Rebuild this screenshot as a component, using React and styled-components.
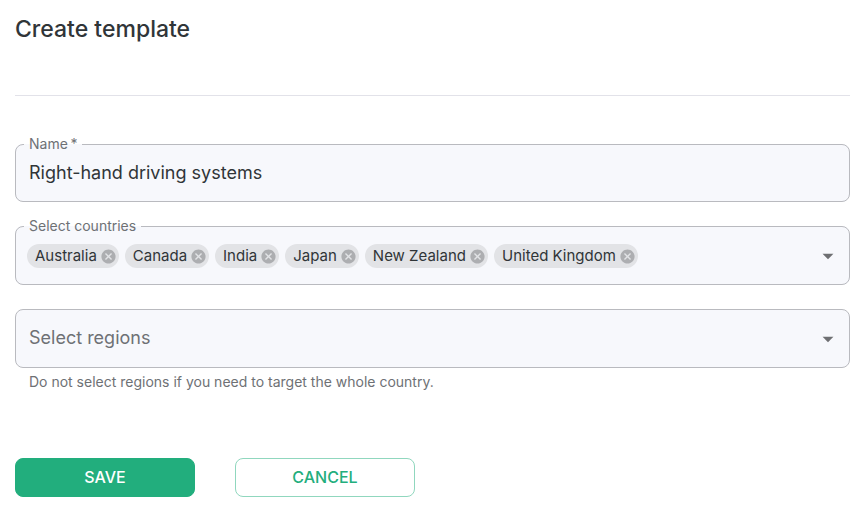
import React, { useState } from "react";
import styled, { createGlobalStyle, css } from "styled-components";

const GlobalStyle = createGlobalStyle`
  *, *::before, *::after { box-sizing: border-box; }
  body {
    margin: 0;
    background: #fff;
    color: #303538;
    font-family: Inter, Roboto, "Liberation Sans", sans-serif;
    font-size: 18px;
  }
  button, input, select { font: inherit; color: inherit; }
`;

const Page = styled.main`
  padding: 12px 13px 12px 15px;
`;

const Header = styled.header`
  padding-bottom: 49px;
  border-bottom: 1px solid #e2e2e9;
`;

const Title = styled.h1`
  margin: 0;
  font-size: 23px;
  font-weight: 500;
  line-height: 34px;
`;

const Form = styled.form`
  display: flex;
  flex-direction: column;
  padding-top: 38px;
`;

const outline = css`
  border: 1px solid #b9babf;
  border-radius: 8px;
  background: #f7f8fc;
`;

const Outline = styled.fieldset`
  ${outline}
  min-width: 0;
  margin: 0 0 ${(p) => p.$gap}px;
  padding: 0 8px;
`;

const Legend = styled.legend`
  padding: 0 5px;
  color: #6e7175;
  font-size: 14px;
  line-height: 20px;
`;

const TextInput = styled.input`
  display: block;
  width: 100%;
  height: 47px;
  padding: 0 5px 10px;
  border: 0;
  outline: 0;
  background: transparent;
  font-size: 18px;
`;

const ChipField = styled.div`
  display: flex;
  align-items: center;
  min-height: 48px;
  padding: 0 0 8px 3px;
`;

const Chips = styled.div`
  display: flex;
  flex: 1;
  flex-wrap: wrap;
  gap: 6px;
`;

const Chip = styled.span`
  display: inline-flex;
  align-items: center;
  gap: 3px;
  height: 24px;
  padding: 0 2px 0 8px;
  border-radius: 12px;
  background: #e2e3e6;
  font-size: 15px;
  line-height: 24px;
  white-space: nowrap;
`;

const IconButton = styled.button`
  display: flex;
  padding: 0;
  border: 0;
  background: transparent;
  color: ${(p) => p.$color};
  cursor: pointer;
`;

const ChipInput = styled.input`
  flex: 1;
  width: 0;
  min-width: 30px;
  height: 24px;
  padding: 0;
  border: 0;
  outline: 0;
  background: transparent;
`;

const SelectBox = styled.div`
  ${outline}
  display: grid;
  align-items: center;
  height: 59px;
`;

const Select = styled.select`
  grid-area: 1 / 1;
  width: 100%;
  height: 57px;
  padding: 0 40px 2px 13px;
  border: 0;
  outline: 0;
  appearance: none;
  background: transparent;
  color: #6e7175;
  font-size: 18px;
`;

const SelectArrow = styled.span`
  grid-area: 1 / 1;
  display: flex;
  justify-self: end;
  padding-right: 8px;
  color: #6e6f72;
  pointer-events: none;
`;

const Helper = styled.p`
  margin: 4px 14px 0;
  color: #6e7175;
  font-size: 14px;
  line-height: 20px;
`;

const Actions = styled.div`
  display: flex;
  gap: 40px;
  padding-top: 66px;
`;

const Button = styled.button`
  width: 180px;
  height: 39px;
  padding: 0 0 2px;
  border: 1px solid ${(p) => (p.$primary ? "#22ae7d" : "#90d7be")};
  border-radius: 8px;
  background: ${(p) => (p.$primary ? "#22ae7d" : "#fff")};
  color: ${(p) => (p.$primary ? "#fff" : "#22ae7d")};
  font-size: 16px;
  font-weight: 500;
  text-transform: uppercase;
  cursor: pointer;
`;

const RemoveIcon = () => (
  <svg width="17" height="17" viewBox="0 0 24 24" fill="currentColor" aria-hidden="true">
    <path d="M12 2C6.47 2 2 6.47 2 12s4.47 10 10 10 10-4.47 10-10S17.53 2 12 2zm5 13.59L15.59 17 12 13.41 8.41 17 7 15.59 10.59 12 7 8.41 8.41 7 12 10.59 15.59 7 17 8.41 13.41 12 17 15.59z" />
  </svg>
);

const ArrowIcon = () => (
  <svg width="26" height="26" viewBox="0 0 24 24" fill="currentColor" aria-hidden="true">
    <path d="M7 10l5 5 5-5z" />
  </svg>
);

const COUNTRIES = ["Australia", "Canada", "India", "Japan", "New Zealand", "United Kingdom"];

export default function App() {
  const [name, setName] = useState("Right-hand driving systems");
  const [countries, setCountries] = useState(COUNTRIES);

  return (
    <>
      <GlobalStyle />
      <Page>
        <Header>
          <Title>Create template</Title>
        </Header>
        <Form onSubmit={(e) => e.preventDefault()}>
          <Outline $gap={14}>
            <Legend>
              <label htmlFor="name">Name&thinsp;*</label>
            </Legend>
            <TextInput id="name" required value={name} onChange={(e) => setName(e.target.value)} />
          </Outline>
          <Outline $gap={24}>
            <Legend>
              <label htmlFor="countries">Select countries</label>
            </Legend>
            <ChipField>
              <Chips>
                {countries.map((country) => (
                  <Chip key={country}>
                    {country}
                    <IconButton
                      type="button"
                      $color="#adaeb1"
                      aria-label={`Remove ${country}`}
                      onClick={() => setCountries(countries.filter((c) => c !== country))}
                    >
                      <RemoveIcon />
                    </IconButton>
                  </Chip>
                ))}
                <ChipInput id="countries" role="combobox" aria-expanded="false" />
              </Chips>
              <IconButton type="button" $color="#6e6f72" aria-label="Open countries">
                <ArrowIcon />
              </IconButton>
            </ChipField>
          </Outline>
          <SelectBox>
            <Select aria-label="Select regions" aria-describedby="regions-help" defaultValue="">
              <option value="">Select regions</option>
            </Select>
            <SelectArrow>
              <ArrowIcon />
            </SelectArrow>
          </SelectBox>
          <Helper id="regions-help">Do not select regions if you need to target the whole country.</Helper>
          <Actions>
            <Button type="submit" $primary>Save</Button>
            <Button type="button">Cancel</Button>
          </Actions>
        </Form>
      </Page>
    </>
  );
}
